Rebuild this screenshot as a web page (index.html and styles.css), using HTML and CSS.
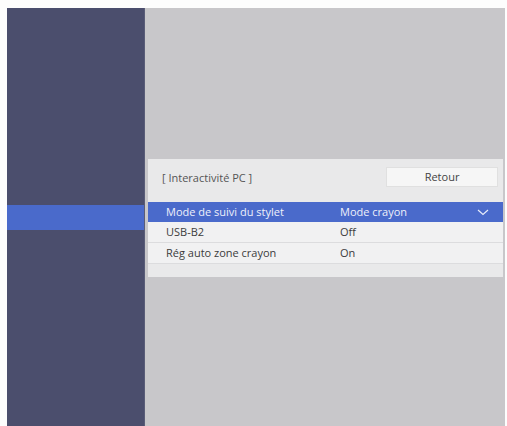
FILE: index.html
```html
<!doctype html>
<html lang="fr">
<head>
	<meta charset="UTF-8">
	<title>Interactivité PC</title>
	<link rel="stylesheet" href="styles.css">
</head>
<body>
	<div class="screen">
		<div class="side">
			<div class="side-on"></div>
		</div>
		<div class="main">
			<div class="panel">
				<div class="panel-head">
					<span class="panel-title">[ Interactivité PC ]</span>
					<span class="btn">Retour</span>
				</div>
				<ul class="list">
					<li class="row row-on">
						<span class="label">Mode de suivi du stylet</span>
						<span class="value">Mode crayon</span>
						<svg class="chev" width="12" height="7" viewBox="0 0 12 7"><path d="M1 1 L6 5.5 L11 1" fill="none" stroke="#e8ecfa" stroke-width="1.2"/></svg>
					</li>
					<li class="row">
						<span class="label">USB-B2</span>
						<span class="value">Off</span>
					</li>
					<li class="row">
						<span class="label">Rég auto zone crayon</span>
						<span class="value">On</span>
					</li>
				</ul>
			</div>
		</div>
	</div>
</body>
</html>
```

FILE: styles.css
```css
html,
body{
	height: 100%;
	overflow: hidden;
}
body{
	margin: 0;
	background: #fdfdfd;
	font: 11px/1.4 "Open Sans", "Noto Sans", sans-serif;
	color: #444;
}
.screen{
	display: flex;
	height: 418px;
	margin: 8px 2px 0 7px;
}
/* colonne de gauche */
.side{
	width: 138px;
	background: #4b4e6d;
	padding-top: 197px;
	box-sizing: border-box;
	border-right: 1px solid #5a5d78;
}
.side-on{
	height: 25px;
	background: #4a6acb;
}
.main{
	flex: 1;
	background: #c8c7ca;
	padding: 151px 2px 0 3px;
}
.panel{
	background: #e9e9ea;
	padding-bottom: 13px;
}
.panel-head{
	display: flex;
	align-items: center;
	justify-content: space-between;
	height: 43px;
	padding: 0 5px 8px 14px;
	box-sizing: border-box;
}
.panel-title{
	color: #555;
	margin-top: 3px;
}
.btn{
	width: 112px;
	height: 20px;
	line-height: 18px;
	text-align: center;
	background: #f6f6f6;
	border: 1px solid #e0e0e0;
	box-sizing: border-box;
	color: #444;
}
.list{
	list-style: none;
	margin: 0;
	padding: 0;
}
.row{
	display: flex;
	align-items: center;
	height: 20px;
	padding-left: 18px;
	background: #f1f1f2;
	border-bottom: 1px solid #dcdcde;
	color: #3c3c3c;
}
.row-on{
	background: #4a6acb;
	color: #eef0fa;
	border-bottom: 0;
}
.label{
	width: 174px;
}
.value{
	flex: 1;
}
.chev{
	margin-right: 14px;
}
```
